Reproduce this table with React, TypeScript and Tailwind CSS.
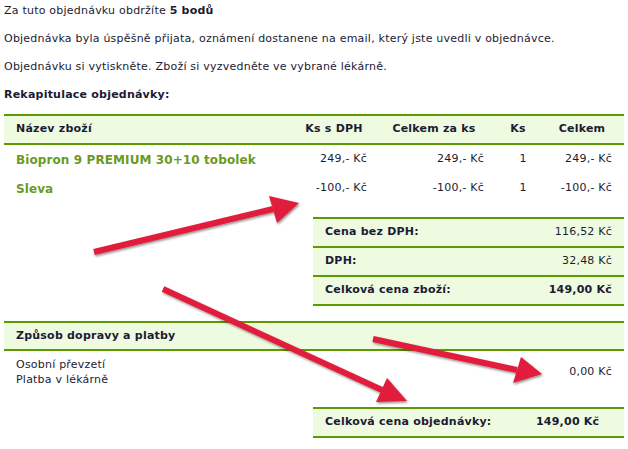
import React from "react";

const font = { fontFamily: '"DejaVu Sans", Verdana, sans-serif' };

type Item = { name: string; price: string; total: string; qty: string; sum: string };

const items: Item[] = [
  { name: "Biopron 9 PREMIUM 30+10 tobolek", price: "249,- Kč", total: "249,- Kč", qty: "1", sum: "249,- Kč" },
  { name: "Sleva", price: "-100,- Kč", total: "-100,- Kč", qty: "1", sum: "-100,- Kč" },
];

const summary = [
  { label: "Cena bez DPH:", value: "116,52 Kč", bold: false },
  { label: "DPH:", value: "32,48 Kč", bold: false },
  { label: "Celková cena zboží:", value: "149,00 Kč", bold: true },
];

function Arrow({ tail, base, tip, c1, c2 }: { tail: number[]; base: number[]; tip: number[]; c1: number[]; c2: number[] }) {
  return (
    <g>
      <line x1={tail[0]} y1={tail[1]} x2={base[0]} y2={base[1]} stroke="#e11d3c" strokeWidth={6} />
      <polygon points={`${c1[0]},${c1[1]} ${tip[0]},${tip[1]} ${c2[0]},${c2[1]}`} fill="#e11d3c" />
    </g>
  );
}

export default function App() {
  return (
    <div className="relative w-[628px] h-[449px] overflow-hidden bg-white text-[11px] tracking-[0.22px] text-[#1b1b33]" style={font}>
      <div className="pt-[4px] px-[4px]">
        <p className="leading-[14px] mb-[14px]">
          Za tuto objednávku obdržíte <b>5 bodů</b>
        </p>
        <p className="leading-[14px] mb-[14px]">
          Objednávka byla úspěšně přijata, oznámení dostanene na email, který jste uvedli v objednávce.
        </p>
        <p className="leading-[14px] mb-[14px]">Objednávku si vytiskněte. Zboží si vyzvedněte ve vybrané lékárně.</p>
        <p className="leading-[14px] font-bold mb-[12px]">Rekapitulace objednávky:</p>

        {/* Items */}
        <div className="w-[620px]">
          <div className="flex items-center h-[31px] bg-[#effbe1] border-y-2 border-[#5c9a00] font-bold">
            <div className="w-[292px] pl-[12px]">Název zboží</div>
            <div className="w-[76px] text-center">Ks s DPH</div>
            <div className="w-[124px] text-center">Celkem za ks</div>
            <div className="w-[44px] text-center">Ks</div>
            <div className="flex-1 text-center">Celkem</div>
          </div>
          {items.map((it) => (
            <div key={it.name} className="flex items-center h-[29px]">
              <div className="w-[292px] pl-[12px] text-[12px] tracking-[0.1px] font-bold text-[#6a9a1e]">{it.name}</div>
              <div className="w-[76px] text-right pr-[5px]">{it.price}</div>
              <div className="w-[124px] text-right pr-[12px]">{it.total}</div>
              <div className="w-[44px] text-center pl-[10px]">{it.qty}</div>
              <div className="flex-1 text-right pr-[12px]">{it.sum}</div>
            </div>
          ))}
        </div>

        <div className="ml-[309px] mt-[14px] w-[311px] border-t-2 border-[#5c9a00]">
          {summary.map((s) => (
            <div key={s.label} className="flex items-center justify-between h-[29px] px-[12px] bg-[#effbe1] border-b-2 border-[#5c9a00]">
              <span className="font-bold">{s.label}</span>
              <span className={s.bold ? "font-bold" : ""}>{s.value}</span>
            </div>
          ))}
        </div>

        {/* Shipping */}
        <div className="w-[620px] mt-[15px]">
          <div className="flex items-center h-[30px] bg-[#effbe1] border-y-2 border-[#5c9a00] font-bold pl-[12px]">
            Způsob dopravy a platby
          </div>
          <div className="flex items-center justify-between h-[41px] pl-[12px] pr-[12px] pt-[1px]">
            <div className="leading-[15px]">
              <div>Osobní převzetí</div>
              <div>Platba v lékárně</div>
            </div>
            <div>0,00 Kč</div>
          </div>
        </div>

        <div className="ml-[309px] mt-[15px] w-[311px] flex items-center h-[31px] bg-[#effbe1] border-y-2 border-[#5c9a00] font-bold pl-[12px]">
          <span className="w-[211px]">Celková cena objednávky:</span>
          <span>149,00 Kč</span>
        </div>
      </div>

      <svg className="absolute left-0 top-0 pointer-events-none" width={628} height={449} viewBox="0 0 628 449">
        <defs>
          <filter id="sh" x="-10%" y="-10%" width="120%" height="130%">
            <feDropShadow dx={1} dy={1.5} stdDeviation={1.2} floodColor="#000" floodOpacity={0.45} />
          </filter>
        </defs>
        <g filter="url(#sh)">
          <Arrow tail={[94, 252]} base={[273, 209]} tip={[299, 203]} c1={[269, 196]} c2={[277, 223]} />
          <Arrow tail={[163, 289]} base={[382, 390]} tip={[407, 401]} c1={[387, 378]} c2={[376, 402]} />
          <Arrow tail={[373, 339]} base={[517, 370]} tip={[542, 374]} c1={[521, 357]} c2={[513, 383]} />
        </g>
      </svg>
    </div>
  );
}
